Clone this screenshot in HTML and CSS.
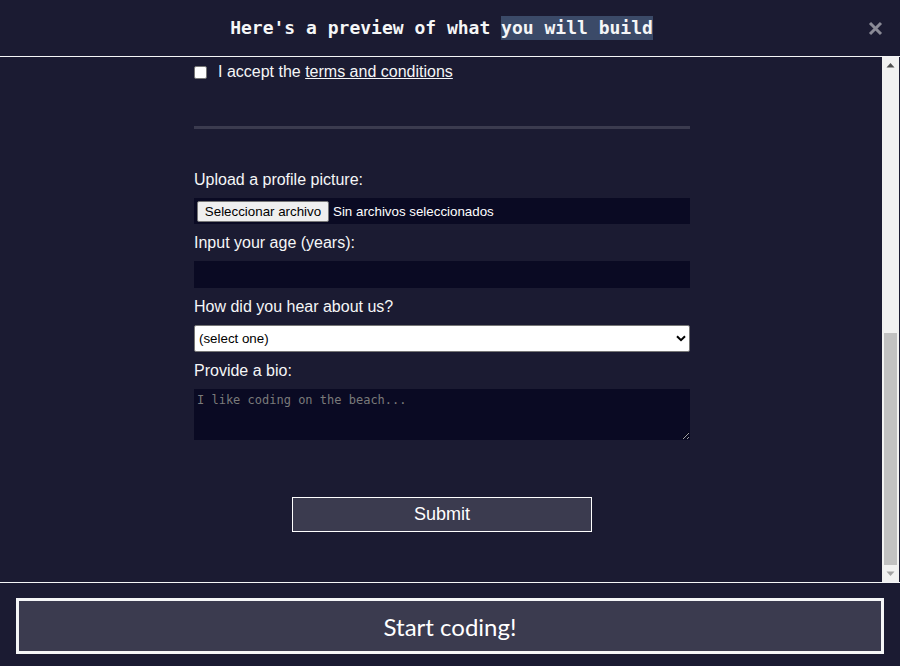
FILE: index.html
```html
<!DOCTYPE html>
<html lang="en">
<head>
<meta charset="utf-8">
<title>Preview</title>
<link rel="stylesheet" href="styles.css">
</head>
<body>
<header class="topbar">
  <h1 class="title">Here's a preview of what <span class="hl">you will build</span></h1>
  <button class="close" type="button" aria-label="Close">
    <svg width="15" height="15" viewBox="0 0 15 15"><path d="M2 2 L13 13 M13 2 L2 13" stroke="#8a8a96" stroke-width="3" stroke-linecap="butt" fill="none"/></svg>
  </button>
</header>
<div class="viewport">
  <div class="page">
    <form class="form">
      <label class="accept"><input class="check" type="checkbox"><span>I accept the <a class="terms" href="#">terms and conditions</a></span></label>
      <hr class="rule">
      <label class="lbl">Upload a profile picture:</label>
      <div class="file"><span class="file-btn">Seleccionar archivo</span><span class="file-txt">Sin archivos seleccionados</span></div>
      <label class="lbl">Input your age (years):</label>
      <input class="field" type="text">
      <label class="lbl">How did you hear about us?</label>
      <div class="select"><span>(select one)</span>
        <svg width="10" height="7" viewBox="0 0 10 7"><path d="M1 1.2 L5 5.2 L9 1.2" stroke="#000" stroke-width="2" fill="none"/></svg>
      </div>
      <label class="lbl">Provide a bio:</label>
      <textarea class="bio" placeholder="I like coding on the beach..."></textarea>
      <button class="submit" type="button">Submit</button>
    </form>
  </div>
  <div class="scrollbar">
    <div class="arrow"><svg width="17" height="17" viewBox="0 0 17 17"><path d="M4.5 10.5 L8.5 6 L12.5 10.5 Z" fill="#505050"/></svg></div>
    <div class="track"><div class="thumb"></div></div>
    <div class="arrow"><svg width="17" height="17" viewBox="0 0 17 17"><path d="M4.5 6.5 L8.5 11 L12.5 6.5 Z" fill="#a3a3a3"/></svg></div>
  </div>
</div>
<footer class="bottom">
  <button class="start" type="button">Start coding!</button>
</footer>
</body>
</html>
```

FILE: styles.css
```css
* { box-sizing: border-box; }

body {
  margin: 0;
  height: 666px;
  overflow: hidden;
  background: #1b1b32;
  color: #f5f6f7;
  font-family: "Liberation Sans", Arial, sans-serif;
}

.topbar {
  height: 57px;
  border-bottom: 1px solid #f5f6f7;
  display: flex;
  align-items: center;
  justify-content: center;
  padding-right: 17px;
  position: relative;
}

.title {
  margin: 0;
  font: bold 18px/24px "DejaVu Sans Mono", monospace;
  color: #f5f6f7;
}

.hl {
  background: #3b4a68;
  padding: 1px 0 2px;
}

.close {
  position: absolute;
  right: 17px;
  top: 21px;
  width: 15px;
  height: 15px;
  padding: 0;
  border: 0;
  background: none;
  display: flex;
}

.viewport {
  display: flex;
  height: 526px;
  border-bottom: 1px solid #f5f6f7;
}

.page {
  flex: 1;
  overflow: hidden;
}

.form {
  width: 496px;
  margin-left: 194px;
  padding-top: 5px;
}

.accept {
  display: flex;
  align-items: center;
  height: 19px;
  font-size: 16px;
  line-height: 19px;
}

.check {
  appearance: none;
  -webkit-appearance: none;
  width: 13px;
  height: 13px;
  margin: 2px 11px 0 0;
  background: #fff;
  border: 1px solid #767676;
  border-radius: 2px;
}

.terms {
  color: #f5f6f7;
  text-decoration: underline;
}

.rule {
  margin: 45px 0 41px;
  height: 3px;
  border: 0;
  background: #3b3b4f;
}

.lbl {
  display: block;
  font-size: 16px;
  line-height: 19px;
  margin-bottom: 9px;
}

.file {
  height: 26px;
  background: #0a0a23;
  display: flex;
  align-items: center;
  padding-left: 3px;
  margin-bottom: 9px;
  font-size: 13.33px;
}

.file-btn {
  width: 132px;
  height: 21px;
  line-height: 19px;
  text-align: center;
  background: #efefef;
  border: 1px solid #767676;
  border-radius: 2px;
  color: #000;
}

.file-txt {
  margin-left: 4px;
  color: #fff;
}

.field {
  display: block;
  width: 100%;
  height: 27px;
  margin: 0 0 9px;
  border: 0;
  background: #0a0a23;
  color: #fff;
}

.select {
  height: 27px;
  margin-bottom: 9px;
  background: #fff;
  border: 1px solid #767676;
  border-radius: 2px;
  color: #000;
  font-size: 13.33px;
  display: flex;
  align-items: center;
  justify-content: space-between;
  padding: 0 3px 0 4px;
}

.bio {
  display: block;
  width: 100%;
  height: 51px;
  margin: 0;
  padding: 4px 3px 3px;
  border: 0;
  background: #0a0a23;
  color: #fff;
  font: 12px/15px "DejaVu Sans Mono", monospace;
}

.bio::placeholder {
  color: #7a7a7a;
}

.submit {
  display: block;
  width: 300px;
  height: 35px;
  margin: 57px auto 0;
  background: #3b3b4f;
  border: 1px solid #fff;
  color: #fff;
  font: 18px "Liberation Sans", Arial, sans-serif;
  padding: 0;
}

.scrollbar {
  width: 17px;
  margin-right: 1px;
  background: #f1f1f1;
  display: flex;
  flex-direction: column;
}

.arrow {
  height: 17px;
  display: flex;
}

.track {
  flex: 1;
  display: flex;
  flex-direction: column;
  justify-content: flex-end;
}

.thumb {
  height: 232px;
  margin: 0 2px;
  background: #c1c1c1;
}

.bottom {
  height: 83px;
  display: flex;
  padding: 15px 16px 12px;
}

.start {
  flex: 1;
  background: #3b3b4f;
  border: 3px solid #f5f6f7;
  color: #fff;
  font: 24px "Lato", sans-serif;
  padding: 0;
}
```
